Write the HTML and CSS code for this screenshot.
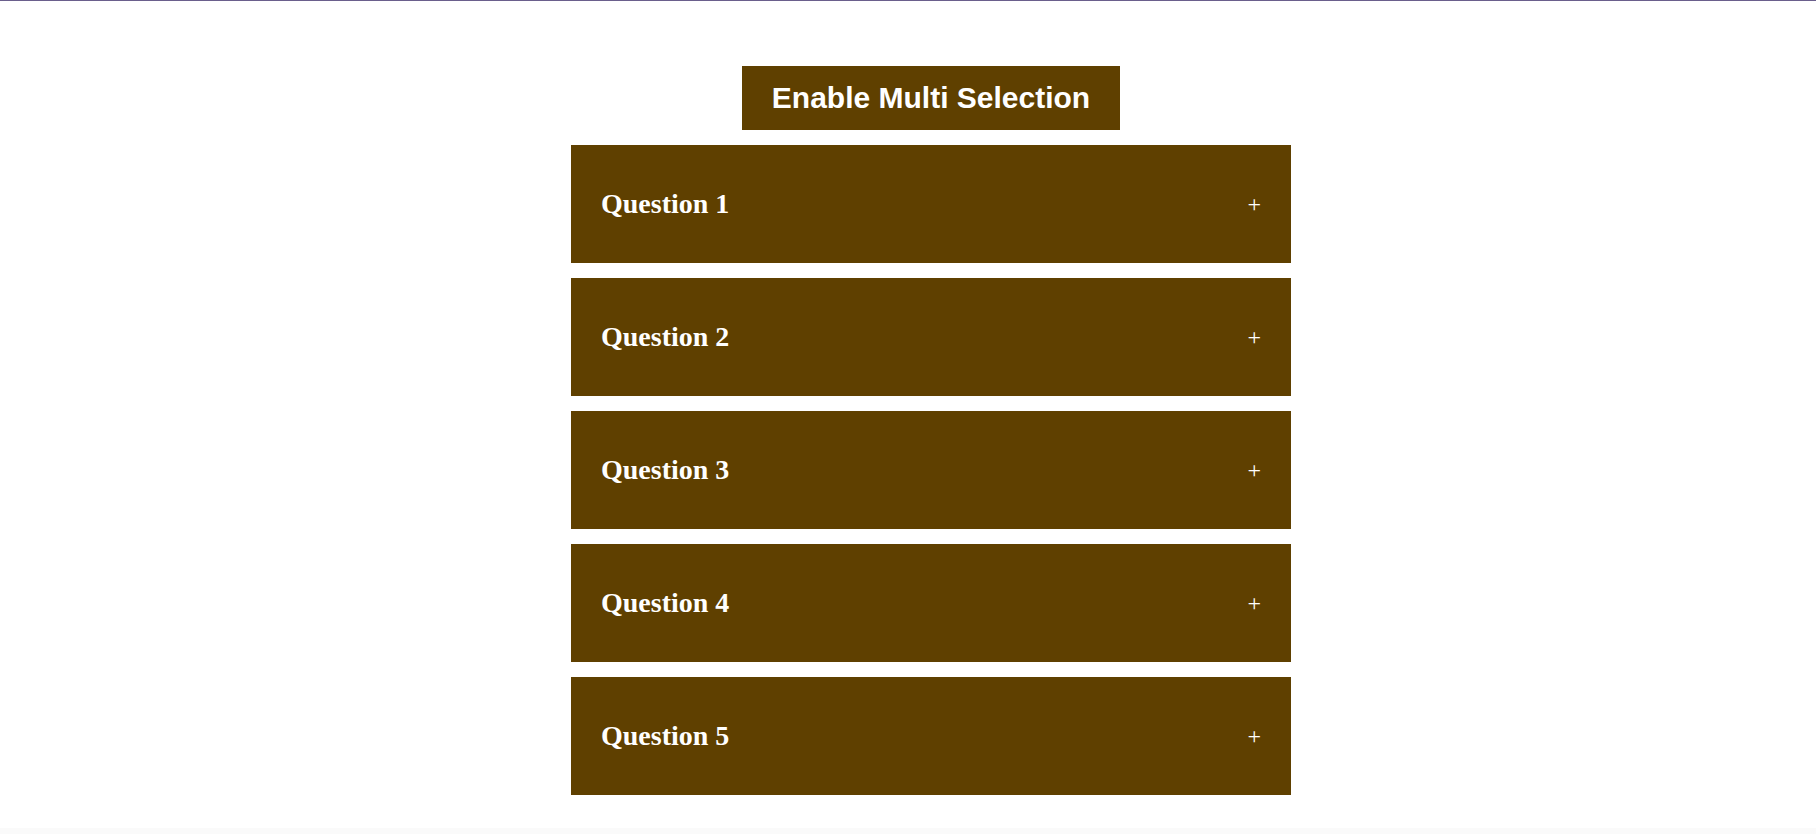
FILE: index.html
```html
<!DOCTYPE html>
<html lang="en">
<head>
<meta charset="utf-8">
<title>Accordion</title>
<link rel="stylesheet" href="styles.css">
</head>
<body>
<div class="wrapper">
  <button class="multi-btn">Enable Multi Selection</button>
  <div class="accordion">
    <div class="item"><h3 class="title">Question 1</h3><span class="plus">+</span></div>
    <div class="item"><h3 class="title">Question 2</h3><span class="plus">+</span></div>
    <div class="item"><h3 class="title">Question 3</h3><span class="plus">+</span></div>
    <div class="item"><h3 class="title">Question 4</h3><span class="plus">+</span></div>
    <div class="item"><h3 class="title">Question 5</h3><span class="plus">+</span></div>
  </div>
</div>
</body>
</html>
```
FILE: styles.css
```css
html {
  background: #fafafa;
}
body {
  margin: 0;
  background: #ffffff;
  border-top: 1px solid #6a5f8c;
  height: 828px;
  box-sizing: border-box;
  font-family: "Liberation Serif", "Times New Roman", serif;
}
.wrapper {
  display: flex;
  flex-direction: column;
  align-items: center;
  padding-top: 65px;
  padding-left: 46px;
  gap: 15px;
}
.multi-btn {
  background: #5f4000;
  color: #ffffff;
  border: none;
  font-family: "Liberation Sans", Arial, sans-serif;
  font-weight: bold;
  font-size: 30px;
  line-height: 34px;
  padding: 15px 30px;
  margin: 0;
  cursor: pointer;
}
.accordion {
  width: 720px;
  display: flex;
  flex-direction: column;
  gap: 15px;
}
.item {
  background: #5f4000;
  color: #ffffff;
  height: 118px;
  box-sizing: border-box;
  padding: 0 30px;
  display: flex;
  align-items: center;
  justify-content: space-between;
}
.title {
  margin: 0;
  font-size: 28px;
  font-weight: bold;
}
.plus {
  font-size: 24px;
  font-weight: normal;
  line-height: 1;
}
```
